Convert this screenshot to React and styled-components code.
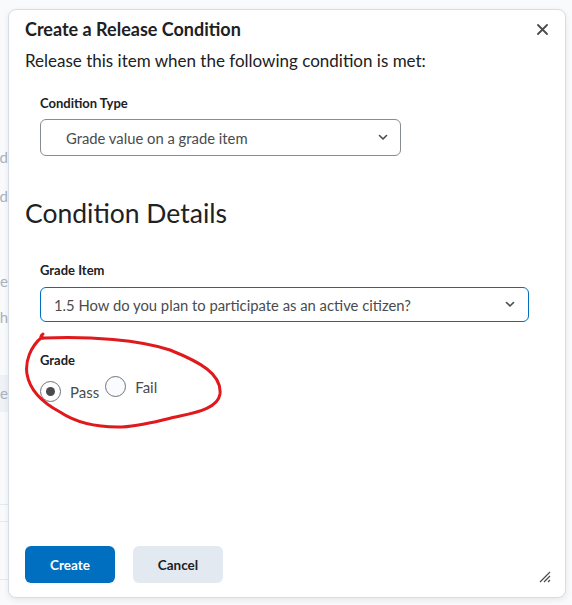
import React from 'react'
import styled, { createGlobalStyle } from 'styled-components'

const GlobalStyle = createGlobalStyle`
  html, body {
    margin: 0;
    padding: 0;
    background: #f9fafc;
    font-family: Lato, "Open Sans", "Liberation Sans", sans-serif;
  }
`

const Page = styled.div`
  position: relative;
  width: 572px;
  height: 605px;
  overflow: hidden;
  background: #f9fafc;
`

const Behind = styled.div`
  width: 8px;
  height: 100%;
  overflow: hidden;
  display: flex;
  flex-direction: column;
  align-items: flex-end;
  padding-top: 138px;
  box-sizing: border-box;
`

const Fragment = styled.div`
  height: ${p => p.h}px;
  width: 60px;
  flex-shrink: 0;
  text-align: right;
  font-size: 15px;
  line-height: ${p => p.h}px;
  color: #a9b2bf;
  background: ${p => (p.hl ? '#eef1f6' : 'transparent')};
  border-bottom: ${p => (p.line ? '1px solid #e6e9ee' : 'none')};
  box-sizing: border-box;
`

const Dialog = styled.div`
  position: absolute;
  top: 9px;
  left: 8px;
  width: 558px;
  height: 589px;
  box-sizing: border-box;
  background: #fff;
  border: 1px solid #d8dde5;
  border-radius: 8px;
  box-shadow: 0 2px 6px rgba(0, 0, 0, 0.08);
  display: flex;
  flex-direction: column;
  padding: 0 16px;
`

const Header = styled.div`
  display: flex;
  align-items: center;
  justify-content: space-between;
  height: 38px;
`

const Title = styled.h2`
  margin: 0;
  font-size: 18px;
  font-weight: 700;
  color: #202122;
`

const CloseBtn = styled.button`
  border: none;
  background: none;
  padding: 0;
  margin-right: 0;
  width: 14px;
  height: 14px;
  display: flex;
  align-items: center;
  justify-content: center;
  color: #494c4e;
`

const Body = styled.div`
  flex: 1;
  display: flex;
  flex-direction: column;
`

const Intro = styled.p`
  margin: 0;
  font-size: 17px;
  line-height: 26px;
  color: #202122;
`

const Field = styled.div`
  padding-left: 15px;
  margin-top: ${p => p.top}px;
`

const Label = styled.div`
  font-size: 13px;
  font-weight: 700;
  color: #202122;
  line-height: 18px;
  margin-bottom: ${p => p.gap}px;
`

const Select = styled.div`
  box-sizing: border-box;
  width: ${p => p.w}px;
  height: ${p => p.h}px;
  border: 1px solid ${p => (p.focus ? '#006fbf' : '#868c91')};
  border-radius: 6px;
  display: flex;
  align-items: center;
  justify-content: space-between;
  padding: 0 ${p => p.pr}px 0 ${p => p.pl}px;
  font-size: 14.8px;
  color: #494c4e;
  background: #fff;
`

const SectionTitle = styled.h3`
  margin: 41px 0 0;
  font-size: 26.5px;
  font-weight: 400;
  line-height: 32px;
  color: #202122;
`

const RadioRow = styled.div`
  display: flex;
  align-items: flex-start;
  gap: 6px;
`

const RadioOption = styled.label`
  display: flex;
  align-items: center;
  gap: 9px;
  margin-top: ${p => p.shift}px;
  font-size: 15px;
  color: #494c4e;
`

const RadioCircle = styled.span`
  box-sizing: border-box;
  width: 21px;
  height: 21px;
  border-radius: 50%;
  border: 1px solid #6e7376;
  background: ${p => (p.checked ? '#fff' : '#f9fbff')};
  display: flex;
  align-items: center;
  justify-content: center;

  &::after {
    content: '';
    display: ${p => (p.checked ? 'block' : 'none')};
    width: 9px;
    height: 9px;
    border-radius: 50%;
    background: #494c4e;
  }
`

const GradeBlock = styled.div`
  position: relative;
`

const Scribble = styled.svg`
  position: absolute;
  left: -20px;
  top: -19px;
  pointer-events: none;
`

const Footer = styled.div`
  display: flex;
  align-items: flex-end;
  gap: 18px;
  padding-bottom: 14px;
  position: relative;
`

const Button = styled.button`
  width: 90px;
  height: 37px;
  border: none;
  border-radius: 6px;
  font-family: inherit;
  font-size: 13.5px;
  font-weight: 700;
  background: ${p => (p.primary ? '#006fbf' : '#e3e9f1')};
  color: ${p => (p.primary ? '#fff' : '#202122')};
`

const Resize = styled.svg`
  position: absolute;
  right: -2px;
  bottom: 14px;
`

const Chevron = () => (
  <svg width="10" height="7" viewBox="0 0 10 7" fill="none">
    <path d="M1.5 1.5 L5 5 L8.5 1.5" stroke="#494c4e" strokeWidth="1.6" strokeLinecap="round" strokeLinejoin="round" />
  </svg>
)

export default function App() {
  return (
    <Page>
      <GlobalStyle />
      <Behind>
        <Fragment h={39}>d</Fragment>
        <Fragment h={39}>d</Fragment>
        <Fragment h={46} />
        <Fragment h={38}>se</Fragment>
        <Fragment h={34}>th</Fragment>
        <Fragment h={41} />
        <Fragment h={37} hl>e</Fragment>
        <Fragment h={93} line />
        <Fragment h={17} line />
        <Fragment h={58} line />
      </Behind>

      <Dialog role="dialog">
        <Header>
          <Title>Create a Release Condition</Title>
          <CloseBtn aria-label="Close">
            <svg width="11" height="11" viewBox="0 0 11 11">
              <path d="M1 1 L10 10 M10 1 L1 10" stroke="#494c4e" strokeWidth="1.8" strokeLinecap="round" />
            </svg>
          </CloseBtn>
        </Header>

        <Body>
          <Intro>Release this item when the following condition is met:</Intro>

          <Field top={20}>
            <Label gap={7}>Condition Type</Label>
            <Select w={361} h={37} pl={25} pr={12}>
              <span>Grade value on a grade item</span>
              <Chevron />
            </Select>
          </Field>

          <SectionTitle>Condition Details</SectionTitle>

          <Field top={32}>
            <Label gap={8}>Grade Item</Label>
            <Select w={489} h={35} pl={13} pr={13} focus>
              <span>1.5 How do you plan to participate as an active citizen?</span>
              <Chevron />
            </Select>
          </Field>

          <Field top={29}>
            <GradeBlock>
              <Label gap={7}>Grade</Label>
              <RadioRow>
                <RadioOption shift={5}>
                  <RadioCircle checked />
                  Pass
                </RadioOption>
                <RadioOption shift={0}>
                  <RadioCircle />
                  Fail
                </RadioOption>
              </RadioRow>
              <Scribble width="210" height="100" viewBox="0 0 210 100" fill="none">
                <path
                  d="M23 2 C20 4 20 7 24 6 C70 4 120 8 150 18 C180 30 202 42 200 62 C198 75 180 80 160 84 C140 88 120 95 98 95 C75 95 55 90 40 80 C25 72 10 60 7 42 C5 30 10 15 22 5"
                  stroke="#e0191c"
                  strokeWidth="3"
                  strokeLinecap="round"
                  strokeLinejoin="round"
                />
              </Scribble>
            </GradeBlock>
          </Field>
        </Body>

        <Footer>
          <Button primary>Create</Button>
          <Button>Cancel</Button>
          <Resize width="12" height="12" viewBox="0 0 12 12">
            <path d="M1 11 L11 1 M5 11 L11 5 M9 11 L11 9" stroke="#494c4e" strokeWidth="1.2" />
          </Resize>
        </Footer>
      </Dialog>
    </Page>
  )
}
